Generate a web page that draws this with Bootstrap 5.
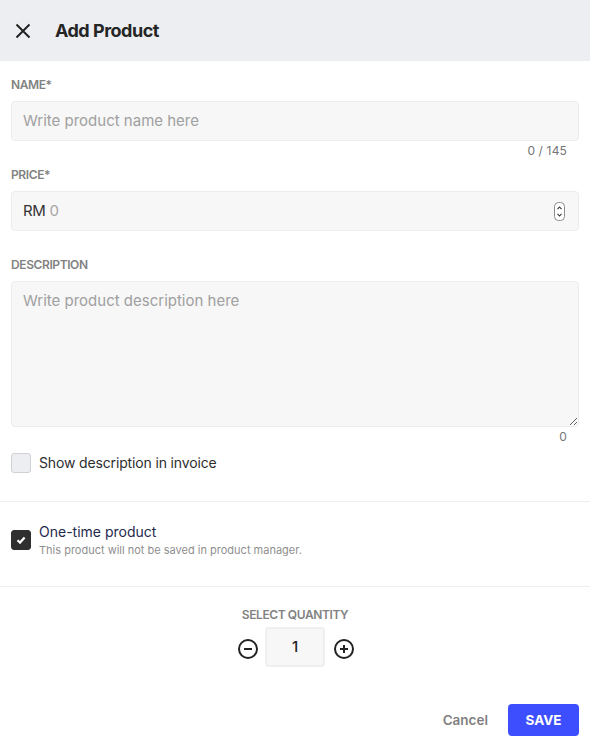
<!DOCTYPE html>
<html lang="en">
<head>
<meta charset="utf-8">
<title>Add Product</title>
<link href="https://cdn.jsdelivr.net/npm/bootstrap@5.3.0/dist/css/bootstrap.min.css" rel="stylesheet">
<style>
html, body { height: 743px; overflow: hidden; }
body { font-family: Inter, "Liberation Sans", sans-serif; background: #fff; color: #2b2b2b; }
.top-bar { height: 61px; background: #eceef2; padding-left: 14px; gap: 23px; }
.top-bar svg { display: block; }
.top-title { font-size: 18px; font-weight: 700; letter-spacing: -0.5px; color: #252525; line-height: 1; margin: 0; }
.form-zone { padding: 0 11px; }
.lbl { display: block; font-size: 12px; font-weight: 600; letter-spacing: -0.4px; color: #828282; line-height: 14px; margin: 0; }
.lbl-name { padding-top: 17px; padding-bottom: 9px; }
.lbl-price { padding-bottom: 9px; }
.lbl-desc { padding-top: 27px; padding-bottom: 9px; }
.fld.form-control { background: #f7f7f7; border: 1px solid #ececec; border-radius: 4px; height: 40px; font-size: 15px; color: #2b2b2b; padding: 0 11px 2px; box-shadow: none; }
.fld.form-control::placeholder { color: #a0a0a0; opacity: 1; }
.price-wrap { background: #f7f7f7; border: 1px solid #ececec; border-radius: 4px; height: 40px; padding: 0 11px; gap: 4px; font-size: 15px; }
.rm-tag { letter-spacing: -0.4px; color: #333; }
.price-wrap input { background: transparent; border: 0; outline: 0; padding: 0; flex: 1 1 auto; min-width: 0; font-size: 15px; color: #2b2b2b; }
.price-wrap input::placeholder { color: #a6a6a6; opacity: 1; }
.spin-ico { margin-right: 2px; display: block; }
.fld-area.form-control { height: 146px; padding: 8px 11px; resize: vertical; }
.counter { font-size: 12px; line-height: 14px; letter-spacing: 0.15px; color: #757575; text-align: right; padding-right: 12px; }
.c-name { padding-top: 3px; padding-bottom: 10px; }
.c-desc { padding-top: 3px; }
.chk-box.form-check-input { width: 20px; height: 20px; margin: 0; float: none; flex: none; background-color: #eceef2; border: 1px solid #cfd1d5; border-radius: 3px; }
.chk-box.form-check-input:checked { background-color: #2f2f2f; border-color: #2f2f2f; background-size: 10px; background-image: url("data:image/svg+xml,%3Csvg xmlns='http://www.w3.org/2000/svg' viewBox='0 0 10 10'%3E%3Cpath d='M1.5 5.2 4 7.6 8.6 2.6' fill='none' stroke='%23fff' stroke-width='2.2'/%3E%3C/svg%3E"); }
.chk-row { padding-top: 9px; gap: 8px; }
.chk-label { font-size: 14px; line-height: 17px; letter-spacing: -0.15px; color: #2e2e2e; margin: -2px 0 0; }
.rule { border-top: 1px solid #efefef; }
.once-row { padding: 21px 11px 29px; gap: 8px; margin-top: 28px; }
.once-title { font-size: 14px; line-height: 17px; color: #25294d; margin: 0; }
.once-sub { font-size: 11px; line-height: 13px; color: #8f8f8f; margin-top: 4px; }
.qty-zone { padding-top: 21px; }
.qty-lbl { font-size: 12px; line-height: 14px; font-weight: 600; letter-spacing: -0.4px; color: #828282; text-align: center; }
.qty-row { gap: 6px; margin-top: 5px; }
.qty-val { width: 60px; height: 40px; background: #f7f7f7; border: 2px solid #efefef; border-radius: 4px; font-size: 15px; font-weight: 500; color: #222; line-height: 1; padding-bottom: 2px; }
.round-btn { background: none; border: 0; padding: 0; line-height: 0; margin-top: 3px; margin-left: 2px; }
.foot-bar { padding: 37px 11px 0 0; gap: 20px; }
.btn-cancel.btn { font-size: 13.5px; font-weight: 600; color: #7f7f7f; padding: 0; border: 0; background: none; }
.btn-save.btn { width: 71px; height: 32px; padding: 0; font-size: 13.5px; font-weight: 700; color: #fff; background: #3d4efe; border: 0; border-radius: 4px; }
</style>
</head>
<body>
<header class="top-bar d-flex align-items-center">
  <svg width="18" height="18" viewBox="0 0 18 18" fill="none" stroke="#222" stroke-width="2"><path d="M2.5 2.5 15.5 15.5M15.5 2.5 2.5 15.5"/></svg>
  <h1 class="top-title">Add Product</h1>
</header>
<main>
  <div class="form-zone">
    <label class="lbl lbl-name" for="pname">NAME*</label>
    <input id="pname" class="form-control fld" type="text" placeholder="Write product name here">
    <div class="counter c-name">0 / 145</div>
    <label class="lbl lbl-price" for="pprice">PRICE*</label>
    <div class="price-wrap d-flex align-items-center">
      <span class="rm-tag">RM</span>
      <input id="pprice" type="text" placeholder="0">
      <svg class="spin-ico" width="11" height="19" viewBox="0 0 11 19" fill="none"><rect x=".5" y=".5" width="10" height="18" rx="4" fill="#fff" stroke="#8a8a8a"/><path d="M3.5 7.2 5.5 5l2 2.2M3.5 11.8l2 2.2 2-2.2" stroke="#333" stroke-width="1.1"/></svg>
    </div>
    <label class="lbl lbl-desc" for="pdesc">DESCRIPTION</label>
    <textarea id="pdesc" class="form-control fld fld-area" placeholder="Write product description here"></textarea>
    <div class="counter c-desc">0</div>
    <div class="chk-row d-flex align-items-center">
      <input id="showdesc" class="form-check-input chk-box" type="checkbox">
      <label class="chk-label" for="showdesc">Show description in invoice</label>
    </div>
  </div>
  <section class="once-row rule d-flex align-items-center">
    <input id="once" class="form-check-input chk-box" type="checkbox" checked>
    <div>
      <label class="once-title d-block" for="once">One-time product</label>
      <div class="once-sub">This product will not be saved in product manager.</div>
    </div>
  </section>
  <section class="qty-zone rule">
    <div class="qty-lbl">SELECT QUANTITY</div>
    <div class="qty-row d-flex justify-content-center align-items-center">
      <button class="round-btn" type="button" aria-label="Decrease"><svg width="22" height="22" viewBox="0 0 22 22" fill="none" stroke="#222" stroke-width="2"><circle cx="11" cy="11" r="9"/><path d="M7 11h8"/></svg></button>
      <div class="qty-val d-flex align-items-center justify-content-center">1</div>
      <button class="round-btn" type="button" aria-label="Increase"><svg width="22" height="22" viewBox="0 0 22 22" fill="none" stroke="#222" stroke-width="2"><circle cx="11" cy="11" r="9"/><path d="M7 11h8M11 7v8"/></svg></button>
    </div>
  </section>
  <div class="foot-bar d-flex justify-content-end align-items-center">
    <button class="btn btn-cancel" type="button">Cancel</button>
    <button class="btn btn-save" type="button">SAVE</button>
  </div>
</main>
<script src="https://cdn.jsdelivr.net/npm/bootstrap@5.3.0/dist/js/bootstrap.bundle.min.js"></script>
</body>
</html>
